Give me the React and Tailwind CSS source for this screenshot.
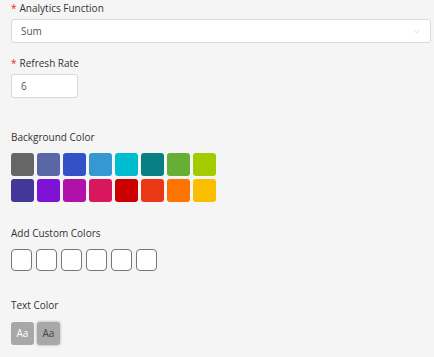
import { ChevronDown } from "lucide-react";

const bgColors = [
  ["#666666", "#5a67a6", "#3452c8", "#3598d1", "#00bcd0", "#087f82", "#67ae34", "#a2cb00"],
  ["#433899", "#7f12d4", "#b012a9", "#d9175f", "#cc0000", "#ea3816", "#fe7400", "#fbbd00"],
];

const Label = ({ required, children }) => (
  <div className="flex items-center text-[10px] leading-[14px] text-[#333]">
    {required && <span className="text-[#f5222d] mr-[3px] text-[10px]">*</span>}
    {children}
  </div>
);

export default function App() {
  return (
    <div
      className="w-[434px] h-[357px] bg-[#f5f5f5] pl-[11px] pr-[3px] pt-[1px] overflow-hidden"
      style={{ fontFamily: '"Open Sans", sans-serif' }}
    >
      <Label required>Analytics Function</Label>
      <div className="mt-[4px] h-[24px] bg-white border border-[#d9d9d9] rounded-[3px] flex items-center justify-between pl-[9px] pr-[8px]">
        <span className="text-[10px] text-[#555]">Sum</span>
        <ChevronDown size={11} strokeWidth={1.2} className="text-[#c4c4c4]" />
      </div>

      <div className="mt-[13px]">
        <Label required>Refresh Rate</Label>
      </div>
      <div className="mt-[4px] w-[67px] h-[24px] bg-white border border-[#d9d9d9] rounded-[3px] flex items-center pl-[9px]">
        <span className="text-[10px] text-[#555]">6</span>
      </div>

      <div className="mt-[32px]">
        <Label>Background Color</Label>
      </div>
      <div className="mt-[9px] flex flex-col gap-[3px]">
        {bgColors.map((row, i) => (
          <div key={i} className="flex gap-[3px]">
            {row.map((c) => (
              <div key={c} className="w-[23px] h-[23px] rounded-[3px]" style={{ backgroundColor: c }} />
            ))}
          </div>
        ))}
      </div>

      <div className="mt-[24px]">
        <Label>Add Custom Colors</Label>
      </div>
      <div className="mt-[9px] flex gap-[4px]">
        {[0, 1, 2, 3, 4, 5].map((i) => (
          <div key={i} className="w-[21px] h-[22px] bg-white border-[1.5px] border-[#777] rounded-[4px]" />
        ))}
      </div>

      <div className="mt-[27px]">
        <Label>Text Color</Label>
      </div>
      <div className="mt-[10px] flex gap-[3px]">
        <div className="w-[23px] h-[23px] rounded-[3px] bg-[#a8a8a8] flex items-center justify-center text-[10px] text-white">
          Aa
        </div>
        <div className="w-[23px] h-[23px] rounded-[3px] bg-[#a8a8a8] flex items-center justify-center text-[10px] text-[#444] shadow-[0_0_3px_rgba(0,0,0,0.35)]">
          Aa
        </div>
      </div>
    </div>
  );
}
